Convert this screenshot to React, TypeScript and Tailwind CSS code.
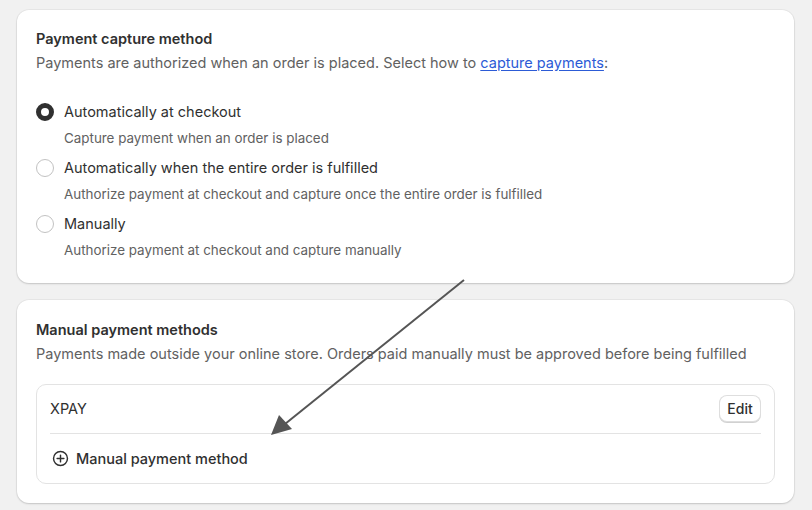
import React from 'react'

const options = [
    { label: 'Automatically at checkout', help: 'Capture payment when an order is placed', checked: true },
    { label: 'Automatically when the entire order is fulfilled', help: 'Authorize payment at checkout and capture once the entire order is fulfilled', checked: false },
    { label: 'Manually', help: 'Authorize payment at checkout and capture manually', checked: false },
]

const Radio: React.FC<{ checked: boolean }> = ({ checked }) =>
    checked ? (
        <span className="w-[18px] h-[18px] rounded-full border-[5px] border-[#303030] bg-white shrink-0" />
    ) : (
        <span className="w-[18px] h-[18px] rounded-full border border-[#c2c2c2] bg-white shrink-0" />
    )

export default function App() {
    return (
        <div className="relative w-[812px] h-[510px] bg-[#f1f1f1] overflow-hidden font-['Inter',sans-serif] text-[#303030]">
            <div className="flex flex-col gap-[17px] pt-[10px] pl-[17px] pr-[18px]">
                {/* Payment capture */}
                <div className="bg-white rounded-[12px] shadow-[0_1px_2px_rgba(0,0,0,0.15),0_0_0_1px_rgba(0,0,0,0.04)] px-[19px] pt-[19px] pb-[24px]">
                    <h2 className="text-[14.5px] leading-[20px] font-semibold">Payment capture method</h2>
                    <p className="mt-[4px] text-[14.5px] leading-[20px] text-[#616161]">
                        Payments are authorized when an order is placed. Select how to{' '}
                        <a className="text-[#2c5bd6] underline underline-offset-2">capture payments</a>:
                    </p>
                    <div className="mt-[29px] flex flex-col gap-[11px]">
                        {options.map((o) => (
                            <div key={o.label}>
                                <div className="flex items-center gap-[10px]">
                                    <Radio checked={o.checked} />
                                    <span className="text-[14.5px] leading-[20px]">{o.label}</span>
                                </div>
                                <p className="mt-[7px] pl-[28px] text-[13.4px] leading-[18px] text-[#616161]">{o.help}</p>
                            </div>
                        ))}
                    </div>
                </div>

                {/* Manual payment methods */}
                <div className="bg-white rounded-[12px] shadow-[0_1px_2px_rgba(0,0,0,0.15),0_0_0_1px_rgba(0,0,0,0.04)] px-[19px] pt-[20px] pb-[19px]">
                    <h2 className="text-[14.5px] leading-[20px] font-semibold">Manual payment methods</h2>
                    <p className="mt-[4px] text-[14.5px] leading-[20px] text-[#616161]">
                        Payments made outside your online store. Orders paid manually must be approved before being fulfilled
                    </p>
                    <div className="mt-[20px] border border-[#e3e3e3] rounded-[10px] pl-[13px] pr-[13px]">
                        <div className="flex items-center justify-between pt-[10px] pb-[11px] border-b border-[#e3e3e3]">
                            <span className="text-[14.5px] leading-[20px]">XPAY</span>
                            <button className="h-[27px] w-[42px] rounded-[8px] bg-white text-[14px] font-medium shadow-[0_1px_0_rgba(0,0,0,0.18),inset_0_0_0_1px_rgba(0,0,0,0.13)]">
                                Edit
                            </button>
                        </div>
                        <div className="h-[49px] flex items-center gap-[7px] pl-[2px]">
                            <svg width="17" height="17" viewBox="0 0 20 20" fill="none" stroke="#303030" strokeWidth="1.7" strokeLinecap="round">
                                <circle cx="10" cy="10" r="8.2" />
                                <path d="M10 6v8M6 10h8" />
                            </svg>
                            <span className="text-[14.5px] leading-[20px] font-medium">Manual payment method</span>
                        </div>
                    </div>
                </div>
            </div>

            {/* annotation arrow */}
            <svg className="absolute inset-0 pointer-events-none" width="812" height="510">
                <line x1="464" y1="280" x2="285" y2="424" stroke="#555" strokeWidth="2" />
                <polygon points="271,435 279,415 292,429" fill="#555" />
            </svg>
        </div>
    )
}
